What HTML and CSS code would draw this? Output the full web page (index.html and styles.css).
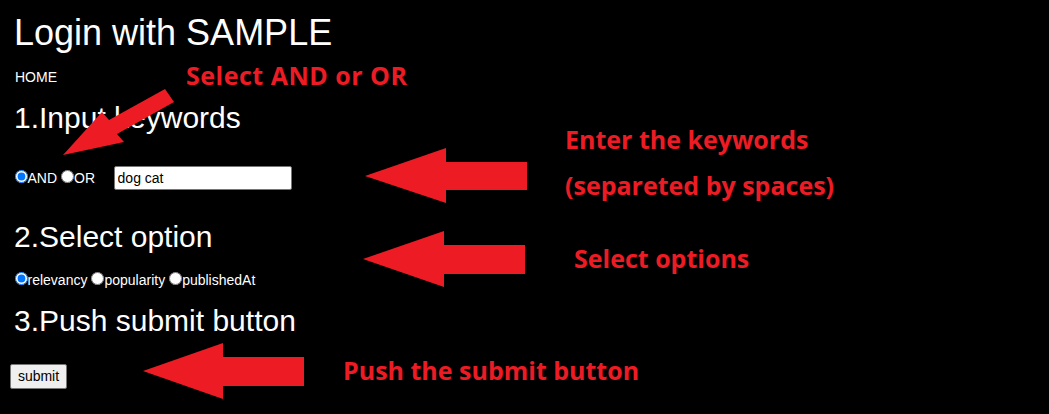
FILE: index.html
```html
<!DOCTYPE html>
<html lang="en">
<head>
<meta charset="utf-8">
<title>Login with SAMPLE</title>
<link rel="stylesheet" href="styles.css">
</head>
<body>
<div class="page">
  <h1 class="title">Login with SAMPLE</h1>
  <a class="home" href="#">HOME</a>
  <h2 class="step step-1">1.Input keywords</h2>
  <div class="row row-keywords">
    <label class="opt"><input type="radio" name="mode" checked>AND</label>
    <label class="opt"><input type="radio" name="mode">OR</label>
    <input class="keywords" type="text" value="dog cat">
  </div>
  <h2 class="step step-2">2.Select option</h2>
  <div class="row row-sort">
    <label class="opt"><input type="radio" name="sort" checked>relevancy</label>
    <label class="opt"><input type="radio" name="sort">popularity</label>
    <label class="opt"><input type="radio" name="sort">publishedAt</label>
  </div>
  <h2 class="step step-3">3.Push submit button</h2>
  <button class="submit" type="button">submit</button>
</div>

<svg class="arrows" width="1049" height="414" viewBox="0 0 1049 414" aria-hidden="true">
  <polygon points="63,155 102,112 109,120 165,89 174,102 117,134 124,142"/>
  <polygon points="365,176 446,148 446,162 527,162 527,190 446,190 446,203"/>
  <polygon points="363,259 444,231 444,245 525,245 525,274 444,274 444,287"/>
  <polygon points="143,371 223,343 223,357 304,357 304,386 223,386 223,399"/>
</svg>
<div class="note note-mode">Select AND or OR</div>
<div class="note note-keywords">Enter the keywords<br>(separeted by spaces)</div>
<div class="note note-options">Select options</div>
<div class="note note-submit">Push the submit button</div>
</body>
</html>
```
FILE: styles.css
```css
html, body {
  margin: 0;
  padding: 0;
  background: #000;
}
body {
  width: 1049px;
  height: 414px;
  overflow: hidden;
  position: relative;
  color: #fff;
  font-family: "Liberation Sans", Arial, sans-serif;
}
.page {
  display: flex;
  flex-direction: column;
  align-items: flex-start;
  padding: 12px 0 0 14px;
}
.title {
  margin: 0;
  font-size: 36px;
  line-height: 41px;
  font-weight: normal;
}
.home {
  margin-top: 16px;
  font-size: 14px;
  line-height: 16px;
  color: #fff;
  text-decoration: none;
  padding-left: 1px;
}
.step {
  margin: 0;
  font-size: 30px;
  line-height: 34px;
  font-weight: normal;
}
.step-1 { margin-top: 15.5px; }
.step-2 { margin-top: 30.7px; }
.step-3 { margin-top: 16.5px; }
.row {
  display: flex;
  align-items: center;
  gap: 4px;
  padding-left: 0.5px;
  font-size: 14px;
  line-height: 16px;
}
.row-keywords { margin-top: 31.3px; }
.row-sort { margin-top: 17.5px; }
.opt {
  display: flex;
  align-items: center;
}
.opt input {
  width: 13px;
  height: 13px;
  margin: 0 0 3px 0;
}
.keywords {
  margin-left: 14.5px;
  width: 178px;
  height: 24px;
  box-sizing: border-box;
  border: 1px solid #767676;
  border-radius: 2px;
  padding: 0 3px;
  font-family: "Liberation Sans", Arial, sans-serif;
  font-size: 14px;
  color: #000;
  background: #fff;
}
.submit {
  margin: 25.3px 0 0 -4px;
  width: 57px;
  height: 25px;
  box-sizing: border-box;
  border: 1px solid #767676;
  border-radius: 2px;
  background: #efefef;
  padding: 0;
  font-family: "Liberation Sans", Arial, sans-serif;
  font-size: 14px;
  color: #000;
}
.arrows {
  position: absolute;
  left: 0;
  top: 0;
  fill: #ed1c24;
}
.note {
  position: absolute;
  color: #ed1c24;
  font-family: "Open Sans", "Noto Sans", sans-serif;
  font-weight: bold;
  font-size: 25px;
  line-height: 25px;
  white-space: nowrap;
}
.note-mode { left: 186px; top: 62.8px; letter-spacing: 0.5px; }
.note-keywords { left: 565px; top: 116.3px; line-height: 46px; }
.note-options { left: 574px; top: 245.8px; }
.note-submit { left: 343px; top: 357.8px; }
```
